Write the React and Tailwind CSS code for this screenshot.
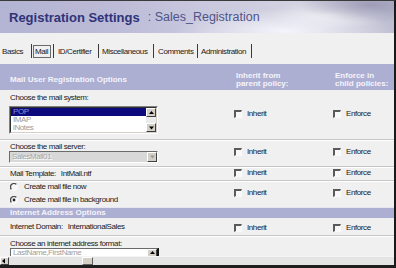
import React from "react";

function Check({ label }) {
  return (
    <div className="flex items-center gap-[5px]">
      <span className="block w-[8px] h-[8px] border-t-2 border-l-2 border-r border-b border-t-[#5a5a5a] border-l-[#5a5a5a] border-r-[#fafafa] border-b-[#fafafa] bg-[#f8f8f8]" />
      <span className="leading-[10px]">{label}</span>
    </div>
  );
}

function Radio({ checked }) {
  return (
    <svg width="8" height="8" viewBox="0 0 8 8" className="block shrink-0">
      <circle cx="4" cy="4" r="3.5" fill="#f8f8f8" />
      <path d="M6.5 1.5 A3.5 3.5 0 0 0 1.5 6.5" stroke="#4a4a4a" strokeWidth="1.3" fill="none" />
      <path d="M1.5 6.5 A3.5 3.5 0 0 0 6.5 1.5" stroke="#fcfcfc" strokeWidth="1" fill="none" />
      {checked && <circle cx="4" cy="4" r="1.4" fill="#222" />}
    </svg>
  );
}

function Arrow({ dir, color = "#000" }) {
  const d =
    dir === "up"
      ? "M1 4 L3.5 1 L6 4 Z"
      : dir === "down"
      ? "M1 1.5 L6 1.5 L3.5 4.5 Z"
      : "M4 0.5 L4 5.5 L1 3 Z";
  return (
    <svg width="7" height="6" viewBox="0 0 7 6" className="block">
      <path d={d} fill={color} />
    </svg>
  );
}

function Btn({ dir, className = "", color }) {
  return (
    <div
      className={
        "flex items-center justify-center bg-[#d4d0c8] border border-t-white border-l-white border-r-[#404040] border-b-[#404040] " +
        className
      }
    >
      <Arrow dir={dir} color={color} />
    </div>
  );
}

export default function App() {
  return (
    <div className="w-[396px] h-[268px] overflow-hidden flex flex-col bg-[#f0f0f0] border-t border-t-[#3a3a3a] border-r-2 border-r-[#1a1a1a] border-b-[3px] border-b-[#1e1e1e] font-['Liberation_Sans',Arial,sans-serif] text-[8px] tracking-[-0.4px] text-[#1a1a1a]">
      {/* Header */}
      <div className="h-[32px] shrink-0 pl-[9px] pt-[10px] flex items-start tracking-normal bg-[radial-gradient(ellipse_110px_22px_at_285px_30px,rgba(250,250,255,0.85),transparent),radial-gradient(ellipse_70px_18px_at_370px_4px,rgba(140,140,170,0.7),transparent),radial-gradient(ellipse_60px_14px_at_330px_14px,rgba(255,255,255,0.6),transparent),linear-gradient(90deg,#b3b3d3_0%,#bcbcd8_30%,#cacadf_55%,#d2d2e0_75%,#bebed2_100%)]">
        <span className="font-bold text-[13px] leading-[13px] text-[#2f3379]">
          Registration Settings
        </span>
        <span className="ml-[8px] text-[12.5px] leading-[13px] text-[#50548a]">
          : Sales_Registration
        </span>
      </div>

      {/* Tabs */}
      <div className="h-[31px] shrink-0 flex items-start pt-[12px]">
        <div className="w-[31px] h-[13px] pl-[2px] leading-[13px]">Basics</div>
        <div className="w-px h-[14px] bg-[#3a3a3a] mt-[-1px]" />
        <div className="w-[21px] pl-[1px]">
          <div className="w-[18px] h-[13px] border border-[#6a6a6a] pl-[1px] leading-[11px]">Mail</div>
        </div>
        <div className="w-px h-[14px] bg-[#3a3a3a] mt-[-1px]" />
        <div className="w-[44px] h-[13px] pl-[4px] leading-[13px]">ID/Certifier</div>
        <div className="w-px h-[14px] bg-[#3a3a3a] mt-[-1px]" />
        <div className="w-[54px] h-[13px] pl-[3px] leading-[13px]">Miscellaneous</div>
        <div className="w-px h-[14px] bg-[#3a3a3a] mt-[-1px]" />
        <div className="w-[43px] h-[13px] pl-[4px] leading-[13px]">Comments</div>
        <div className="w-px h-[14px] bg-[#3a3a3a] mt-[-1px]" />
        <div className="w-[53px] h-[13px] pl-[3px] leading-[13px]">Administration</div>
        <div className="w-px h-[14px] bg-[#3a3a3a] mt-[-1px]" />
      </div>

      {/* Section header 1 */}
      <div className="h-[26px] shrink-0 grid grid-cols-[234px_99px_1fr] bg-[#adafd2] text-[#f4f4fc] font-bold text-[8px] leading-[8px] tracking-normal">
        <div className="pl-[10px] flex items-end pb-[6px]">Mail User Registration Options</div>
        <div className="pl-[2px] flex flex-col justify-end pb-[2px]">
          <span>Inherit from</span>
          <span>parent policy:</span>
        </div>
        <div className="pl-[2px] flex flex-col justify-end pb-[2px]">
          <span>Enforce in</span>
          <span>child policies:</span>
        </div>
      </div>

      {/* Row 1: mail system */}
      <div className="h-[50px] shrink-0 grid grid-cols-[234px_99px_1fr] border-b border-b-[#c6c6c6]">
        <div className="pt-[3px]">
          <div className="pl-[10px] leading-[10px]">Choose the mail system:</div>
          <div className="ml-[9px] mt-[3px] w-[149px] h-[28px] border border-t-[#808080] border-l-[#808080] border-r-white border-b-white">
            <div className="h-full flex border border-t-[#303030] border-l-[#303030] border-r-[#d4d0c8] border-b-[#d4d0c8] bg-white">
              <div className="flex-1 flex flex-col leading-[8px]">
                <div className="h-[8px] bg-[#0b0b7e] text-[#8e8ed0] pl-[2px]">POP</div>
                <div className="h-[8px] text-[#9a9a9a] pl-[2px]">IMAP</div>
                <div className="h-[8px] text-[#9a9a9a] pl-[2px]">iNotes</div>
              </div>
              <div className="w-[10px] flex flex-col bg-[#ebebeb]">
                <Btn dir="up" className="h-[9px]" />
                <div className="flex-1" />
                <Btn dir="down" className="h-[9px]" />
              </div>
            </div>
          </div>
        </div>
        <div className="flex items-center pb-[2px]">
          <Check label="Inherit" />
        </div>
        <div className="flex items-center pb-[2px]">
          <Check label="Enforce" />
        </div>
      </div>

      {/* Row 2: mail server */}
      <div className="h-[27px] shrink-0 grid grid-cols-[234px_99px_1fr] border-t border-t-white border-b border-b-[#c6c6c6]">
        <div className="pt-[1px]">
          <div className="pl-[10px] leading-[9px]">Choose the mail server:</div>
          <div className="ml-[9px] w-[149px] h-[12px] flex border border-t-[#6a6a6a] border-l-[#6a6a6a] border-r-white border-b-white bg-[#d8d8d8]">
            <div className="flex-1 pl-[2px] leading-[10px] text-[#a6a6a6] [text-shadow:1px_1px_0_#fff]">SalesMail01</div>
            <Btn dir="down" color="#9a9a9a" className="w-[10px] h-[10px]" />
          </div>
        </div>
        <div className="pt-[6px]">
          <Check label="Inherit" />
        </div>
        <div className="pt-[6px]">
          <Check label="Enforce" />
        </div>
      </div>

      {/* Row 3: mail template */}
      <div className="h-[14px] shrink-0 grid grid-cols-[234px_99px_1fr] border-t border-t-white border-b border-b-[#c6c6c6]">
        <div className="pl-[10px] pt-[1px] leading-[10px] flex">
          <span>Mail Template:</span>
          <span className="ml-[5px]">IntMail.ntf</span>
        </div>
        <div>
          <Check label="Inherit" />
        </div>
        <div>
          <Check label="Enforce" />
        </div>
      </div>

      {/* Row 4: radios */}
      <div className="h-[26px] shrink-0 grid grid-cols-[234px_99px_1fr] border-t border-t-white">
        <div className="pl-[10px] flex flex-col gap-[3px]">
          <div className="flex items-center gap-[6px] leading-[10px]">
            <Radio />
            <span>Create mail file now</span>
          </div>
          <div className="flex items-center gap-[6px] leading-[10px]">
            <Radio checked />
            <span>Create mail file in background</span>
          </div>
        </div>
        <div className="pt-[6px]">
          <Check label="Inherit" />
        </div>
        <div className="pt-[6px]">
          <Check label="Enforce" />
        </div>
      </div>

      {/* Section header 2 */}
      <div className="h-[11px] shrink-0 bg-[#adafd2] border-t border-t-[#e6e6f0] pl-[10px] text-[#f4f4fc] font-bold text-[8px] leading-[10px] tracking-normal">
        Internet Address Options
      </div>

      {/* Row 5: internet domain */}
      <div className="h-[18px] shrink-0 grid grid-cols-[234px_99px_1fr] border-b border-b-[#c6c6c6]">
        <div className="pl-[10px] pt-[4px] leading-[10px] flex">
          <span>Internet Domain:</span>
          <span className="ml-[5px]">InternationalSales</span>
        </div>
        <div className="pt-[5px]">
          <Check label="Inherit" />
        </div>
        <div className="pt-[5px]">
          <Check label="Enforce" />
        </div>
      </div>

      {/* Row 6: address format */}
      <div className="h-[20px] shrink-0 overflow-hidden border-t border-t-white">
        <div className="pl-[10px] pt-[3px] leading-[8px]">Choose an internet address format:</div>
        <div className="ml-[10px] w-[149px] h-[12px] flex border-t border-l border-t-[#6a6a6a] border-l-[#6a6a6a] border-r-2 border-r-[#111] bg-white">
          <div className="flex-1 pl-[2px] leading-[8px] text-[#a0a0a0]">LastName,FirstName</div>
          <Btn dir="up" className="w-[10px] h-[8px]" />
        </div>
      </div>

      {/* Horizontal scrollbar */}
      <div className="h-[9px] shrink-0 flex bg-[#e4e4e4] border-t border-t-[#f4f4f4]">
        <Btn dir="left" className="w-[9px] h-full" />
        <div className="w-[73px]" />
        <div className="w-[11px] h-full bg-[#d4d0c8] border border-t-white border-l-white border-r-[#606060] border-b-[#606060]" />
      </div>
    </div>
  );
}
